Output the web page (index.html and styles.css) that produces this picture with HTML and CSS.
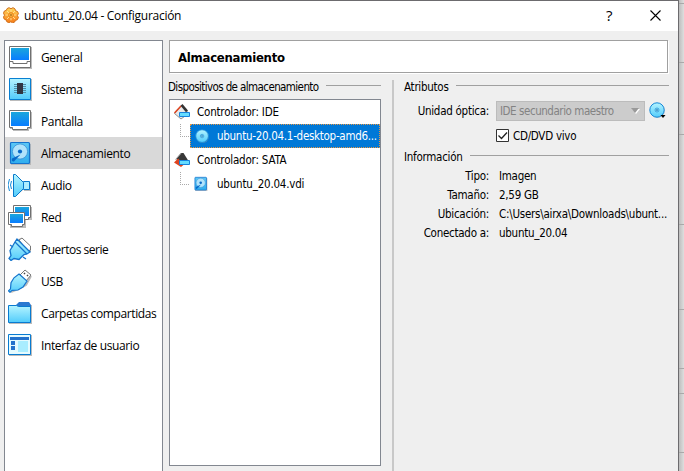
FILE: index.html
```html
<!DOCTYPE html>
<html lang="es">
<head>
<meta charset="utf-8">
<title>ubuntu_20.04 - Configuración</title>
<link rel="stylesheet" href="styles.css">
</head>
<body>
<svg class="defs" width="0" height="0" aria-hidden="true">
  <defs>
    <linearGradient id="screen" x1="0" y1="0" x2="0" y2="1"><stop offset="0" stop-color="#1aa6dc"/><stop offset="1" stop-color="#087cff"/></linearGradient>
    <linearGradient id="cyan" x1="0" y1="0" x2="0" y2="1"><stop offset="0" stop-color="#b5f4ff"/><stop offset="1" stop-color="#52ccfb"/></linearGradient>
    <linearGradient id="disk" x1="0" y1="0" x2="0" y2="1"><stop offset="0" stop-color="#5cc8f5"/><stop offset="1" stop-color="#2fadee"/></linearGradient>
    <linearGradient id="orange" x1="0" y1="0" x2="0" y2="1"><stop offset="0" stop-color="#ffd65a"/><stop offset="1" stop-color="#f77b18"/></linearGradient>
    <g id="hdd">
      <path d="M3 3h20v21H3z" fill="#aaa" opacity=".7"/>
      <rect x="2.500" y="1.500" width="19" height="21" rx="1" fill="url(#disk)" stroke="#1673cd" stroke-width="1.200"/>
      <circle cx="12" cy="10.500" r="7.600" fill="#b0e3fb" stroke="#368fd6" stroke-width=".8"/>
      <circle cx="12" cy="10.500" r="2.100" fill="#0868c8"/>
      <path d="M12.500 13.500l-6.500 7q-3 .5-2-3z" fill="#0868c8"/>
    </g>
    <g id="disc">
      <circle cx="8.5" cy="8.7" r="7.3" fill="#999" opacity=".45"/>
      <circle cx="8" cy="8" r="7.2" fill="url(#cyan)" stroke="#1689d8" stroke-width="1"/>
      <circle cx="8" cy="8" r="2" fill="#86dbfa" stroke="#3297d4" stroke-width=".8"/><circle cx="8" cy="8" r=".8" fill="#0c5c9c"/>
    </g>
  </defs>
</svg>
<div class="desktop">
  <main class="window">
    <header class="titlebar">
      <svg class="app-icon" viewBox="0 0 16 16"><path d="M6 .7l2 1 2-1 2 1.2 .5 1.8 2 .8.9 2-1 2 1 2-1 2.2-2 .7-.8 1.7-2.1.7-1.7-1-2 .9-2-1-.7-1.8-1.9-.8-.7-2 1-1.9-1-2 .9-2.2 1.9-.6.8-1.8z" fill="url(#orange)" stroke="#d1701a"/><path d="M8 5.2V2.5M8 13.3v-2.5M5.2 8H2.5M13.3 8h-2.5M6 6L4 4M10 10l2 2M10 6l2-2M6 10l-2 2" stroke="#ffe69a" stroke-width=".9"/><circle cx="8" cy="8" r="2.3" fill="#ffbd49" stroke="#e88219"/><circle cx="8" cy="8" r=".8" fill="#7c4200"/></svg>
      <h1 class="title">ubuntu_20.04 - Configuración</h1>
      <span class="help">?</span>
      <svg class="close" viewBox="0 0 11 11"><path d="M.5.5l10 10M10.500.5l-10 10" fill="none" stroke="#000" stroke-width="1.1"/></svg>
    </header>
    <div class="content">
      <nav class="sidebar">
        <div class="nav-item"><svg class="nav-icon" viewBox="0 0 24 24"><path d="M2 2h22v22H2z" fill="#bbb"/><path d="M1.500 1.500h21v21h-21z" fill="#fff" stroke="#707070"/><path d="M3 3h18v12H3z" fill="url(#screen)"/><path d="M2 16.500h3v2h14v-2h3" fill="none" stroke="#707070"/></svg><span>General</span></div>
        <div class="nav-item"><svg class="nav-icon" viewBox="0 0 24 24"><path d="M2 2h22v22H2z" fill="#bbb"/><path d="M1.500 1.500h21v21h-21z" fill="url(#cyan)" stroke="#087fd2"/><path d="M6 7.500h12M6 9.500h12M6 11.500h12M6 13.500h12M6 15.500h12" stroke="#5190a8"/><path d="M9 6h6v11H9z" fill="#303641"/></svg><span>Sistema</span></div>
        <div class="nav-item"><svg class="nav-icon" viewBox="0 0 24 24"><path d="M2 3h22v17h-3v2H5v-2H2z" fill="#bbb"/><path d="M1.500 1.500h21v17h-3v2h-15v-2h-3z" fill="#fff" stroke="#707070"/><path d="M3 3h18v14H3z" fill="url(#screen)"/></svg><span>Pantalla</span></div>
        <div class="nav-item nav-item-active"><svg class="nav-icon" viewBox="0 0 24 24"><use href="#hdd"/></svg><span>Almacenamiento</span></div>
        <div class="nav-item"><svg class="nav-icon" viewBox="0 0 24 24"><path d="M7 3l8 8v6l-8 7zM16 10h7v8h-7z" fill="#bbb"/><path d="M15.500 8.500h6v8h-6z" fill="#aeeeff" stroke="#0879cb"/><path d="M5.500 1.500h2l8 8v6l-8 8h-2z" fill="url(#cyan)" stroke="#0879cb"/><path d="M3.500 8q-2 4 0 8M1.500 6q-3 6 0 12" fill="none" stroke="#168bd8"/></svg><span>Audio</span></div>
        <div class="nav-item"><svg class="nav-icon" viewBox="0 0 24 24"><path d="M7 2h17v13H7zM2 10h16v13H2z" fill="#bbb"/><path d="M5.500.5h17v12h-2v2h-13v-2h-2z" fill="#fff" stroke="#707070"/><path d="M7 2h14v9H7z" fill="url(#screen)"/><path d="M.5 7.500h16v12h-2v2h-11v-2h-3z" fill="#fff" stroke="#707070"/><path d="M2 9h13v9H2z" fill="url(#screen)"/></svg><span>Red</span></div>
        <div class="nav-item"><svg class="nav-icon" viewBox="0 0 24 24"><path d="M10 2l4-1 9 9v5l-3 1z" fill="#bbb"/><path d="M11 3l3-2 8.500 8v4l-3 1z" fill="#fff" stroke="#777"/><path d="M7 5l2-3 13 13-3 2-3 .5-5 5-5-1-3 2-2-2 2-3-1-5z" fill="url(#cyan)" stroke="#1474cd" stroke-width="1.3"/><path d="M7 5l12 12M2 8l3 2M15 20l3 2" stroke="#1474cd" stroke-width="1.3"/></svg><span class="nav-serial">Puertos serie</span></div>
        <div class="nav-item"><svg class="nav-icon" viewBox="0 0 24 24"><path d="M3 23l7-3 8-4 5-9" fill="none" stroke="#bbb" stroke-width="2"/><path d="M12 6l5-5 6 5-5 6z" fill="#fff" stroke="#777"/><path d="M16 4l1 1M19 6l1 1" stroke="#444" stroke-width="1.5"/><path d="M11 5l8 7-4 6-5 3-6 .3-2 2-1.500-1.500 2-2 .5-6 3-5z" fill="url(#cyan)" stroke="#1474cd" stroke-width="1.2"/></svg><span>USB</span></div>
        <div class="nav-item"><svg class="nav-icon" viewBox="0 0 24 24"><path d="M1 4h23v19H1z" fill="#bbb"/><path d="M8 4l3-3h10l2 3v3H8z" fill="#2a78d0"/><path d="M.5 4.500h8l2 1h12v16H.5z" fill="url(#cyan)" stroke="#087bd1"/></svg><span>Carpetas compartidas</span></div>
        <div class="nav-item"><svg class="nav-icon" viewBox="0 0 24 24"><path d="M1 2h23v21H1z" fill="#bbb"/><path d="M.5 1.500h22v20H.5z" fill="#e5fbff" stroke="#087bd1"/><path d="M2 4h19v3H2zM3 8h4v4H3zM3 13h4v4H3z" fill="#2372cc"/><path d="M10 8h10v11H10z" fill="#a9edff"/></svg><span>Interfaz de usuario</span></div>
      </nav>
      <section class="page">
        <h2 class="page-title">Almacenamiento</h2>
        <div class="panes">
          <section class="devices">
            <div class="legend devices-legend"><span>Dispositivos de almacenamiento</span><i></i></div>
            <div class="tree">
              <div class="controller"><svg class="controller-icon" viewBox="0 0 18 18"><path d="M1.500 10.500L9 2l6.500 8.500L8 16z" fill="#e8e8e8" stroke="#777" stroke-width=".8"/><path d="M1.500 10L8 3" stroke="#df4520" stroke-width="1.500"/><path d="M8.500 1.800l5.500 6.500" stroke="#333" stroke-width="2.600"/><path d="M6.500 9.500h10v4h-10z" fill="#65dcff" stroke="#1683dd"/></svg><span>Controlador: IDE</span></div>
              <div class="branch"><i class="branch-line"></i><div class="medium medium-selected"><svg class="disc-icon" viewBox="0 0 17 17"><use href="#disc"/></svg><span class="iso">ubuntu-20.04.1-desktop-amd6...</span></div></div>
              <div class="controller"><svg class="controller-icon" viewBox="0 0 18 18"><path d="M3 8l5-6h2.500l5 8-5 3z" fill="#383838"/><path d="M1 11.500L5 7.500l6 6L8 16z" fill="#df4520"/><path d="M2.500 8.500L8 2.500" stroke="#999"/><path d="M6.500 9.500h10v4h-10z" fill="#65dcff" stroke="#1683dd"/></svg><span>Controlador: SATA</span></div>
              <div class="branch"><i class="branch-line"></i><div class="medium"><svg class="disk-icon" viewBox="1 0 23 25"><use href="#hdd"/></svg><span class="vdi">ubuntu_20.04.vdi</span></div></div>
            </div>
          </section>
          <div class="splitter"></div>
          <section class="details">
            <div class="legend attributes-legend"><span>Atributos</span><i></i></div>
            <div class="field drive-row"><label>Unidad óptica:</label><div class="select"><span>IDE secundario maestro</span><svg viewBox="0 0 9 6"><path d="M1 1l4 5 4-5" fill="#fff"/><path d="M0 0h8L4 5z" fill="#999"/></svg></div><svg class="drive-icon" viewBox="0 0 17 17"><use href="#disc"/><path d="M11.500 13h5L14 16z" fill="#000"/></svg></div>
            <div class="live-row"><svg class="checkbox" viewBox="0 0 13 13"><path d="M.5.5h12v12H.5z" fill="#fff" stroke="#333"/><path d="M2.500 6.500l3 3 5.500-6" fill="none" stroke="#222" stroke-width="1.300"/></svg><span>CD/DVD vivo</span></div>
            <div class="legend info-legend"><span>Información</span><i></i></div>
            <dl class="info"><dt>Tipo:</dt><dd>Imagen</dd><dt>Tamaño:</dt><dd class="size">2,59 GB</dd><dt>Ubicación:</dt><dd class="path">C:\Users\airxa\Downloads\ubunt...</dd><dt>Conectado a:</dt><dd class="machine">ubuntu_20.04</dd></dl>
          </section>
        </div>
      </section>
    </div>
  </main>
  <aside class="backdrop"><i></i><i></i><i></i><i></i><i></i><i></i><i></i><i></i></aside>
</div>
</body>
</html>
```

FILE: styles.css
```css
* { box-sizing: border-box; }
html, body { margin: 0; width: 684px; height: 471px; overflow: hidden; }
body { font: 11.5px/19px "DejaVu Sans Condensed", "DejaVu Sans", sans-serif; font-stretch: condensed; letter-spacing: -.27px; color: #000; background: #efefef; }
svg { display: block; flex: none; }
span, dt, dd, label { white-space: nowrap; }
.defs { position: absolute; }
.desktop { display: flex; height: 471px; }
.window { width: 679px; height: 471px; border-top: 1px solid #6c6b6e; border-right: 1px solid #6c6b6e; background: #efefef; }
.titlebar { height: 30px; display: flex; align-items: center; background: #fff; padding-left: 3px; }
.app-icon { width: 16px; height: 16px; margin-top: -2px; }
.title { margin: 0 0 0 5px; width: 160px; font: 12px/20px "Open Sans", "Noto Sans", sans-serif; letter-spacing: -.28px; white-space: nowrap; }
.help { font: 15px/20px "Open Sans", sans-serif; width: 8px; margin-left: 422px; margin-top: -2px; }
.close { width: 11px; height: 11px; margin-left: 36px; margin-top: -2px; }
.content { display: flex; height: 440px; padding: 9px 9px 0 4px; }
.sidebar { flex: none; width: 159px; border: 1px solid #828790; border-bottom: 0; background: #fff; font: 12px/20px "Open Sans", "Noto Sans", sans-serif; letter-spacing: -.38px; }
.nav-item { height: 32px; padding-left: 3px; display: flex; align-items: center; gap: 9px; }
.nav-item span { padding-top: 2px; }
.nav-item .nav-serial { letter-spacing: -.5px; }
.nav-item-active { background: #d9d9d9; }
.nav-icon { width: 24px; height: 24px; }
.page { flex: none; width: 500px; margin-left: 6px; }
.page-title { width: 499px; height: 33px; margin: 0; padding-left: 8px; border: 1px solid #a0a0a0; background: #fff; box-shadow: 1px 1px #fff; font: bold 13px/33px "DejaVu Sans Condensed", sans-serif; font-stretch: condensed; letter-spacing: -.25px; }
.panes { display: flex; height: 398px; padding-top: 6px; }
.devices { width: 212px; }
.legend { height: 17px; line-height: 17px; display: flex; }
.legend i { flex: 1; height: 1px; margin-top: 6px; margin-left: 7px; background: #a0a0a0; }
.devices-legend { margin-left: -1px; }
.devices-legend span { width: 151px; letter-spacing: -.6px; }
.tree { height: 367px; margin-top: 3px; background: #fff; border: 1px solid #828790; letter-spacing: -.2px; }
.controller { height: 24px; padding-left: 3px; display: flex; align-items: center; gap: 6px; line-height: 24px; }
.controller-icon { width: 18px; height: 18px; }
.branch { height: 24px; display: flex; }
.branch-line { width: 9px; height: 13px; margin-left: 10px; margin-right: 1px; border: dotted #aaa; border-width: 0 0 1px 1px; }
.medium { width: 190px; padding-left: 4px; display: flex; align-items: center; gap: 9px; line-height: 23px; }
.medium-selected { background: #0078d7; color: #fff; border: 1px dotted #e69745; padding-left: 4px; gap: 7px; letter-spacing: -.28px; }
.disc-icon { width: 15px; height: 15px; }
.disk-icon { width: 14px; height: 16px; }
.splitter { width: 2px; background: #c8c8c8; margin: 1px 0 0 11px; }
.details { width: 265px; margin-left: 10px; }
.field { height: 20px; display: grid; grid-template-columns: 85px 149px 17px; column-gap: 7px; align-items: center; }
.drive-row { margin-top: 4px; }
.field label { text-align: right; padding-top: 2px; }
.select { height: 20px; padding: 0 4px 0 3px; display: flex; align-items: center; justify-content: space-between; background: #ccc; border: 1px solid #bcbcbc; color: #838383; letter-spacing: -.45px; }
.select span { padding-top: 1px; }
.select svg { width: 9px; height: 6px; }
.drive-icon { width: 17px; height: 17px; margin-left: -3px; }
.live-row { height: 13px; margin: 9px 0 0 92px; display: flex; align-items: center; gap: 4px; line-height: 13px; }
.live-row span { padding-top: 1px; }
.checkbox { width: 13px; height: 13px; }
.info-legend { margin-top: 7px; }
.info { margin: 1px 0 0; display: grid; grid-template-columns: 85px 170px; column-gap: 10px; grid-auto-rows: 19px; }
dt { text-align: right; }
dd { margin: 0; }
.path { letter-spacing: -.25px; }
.backdrop { width: 5px; display: grid; grid-template-rows: 3px 59px 72px 90px 85px 59px 25px 59px; background: linear-gradient(90deg, #bdbdbd, #dedede); }
.backdrop i { border-bottom: 1px solid #a9a9a9; height: calc(100% + 1px); }
```
